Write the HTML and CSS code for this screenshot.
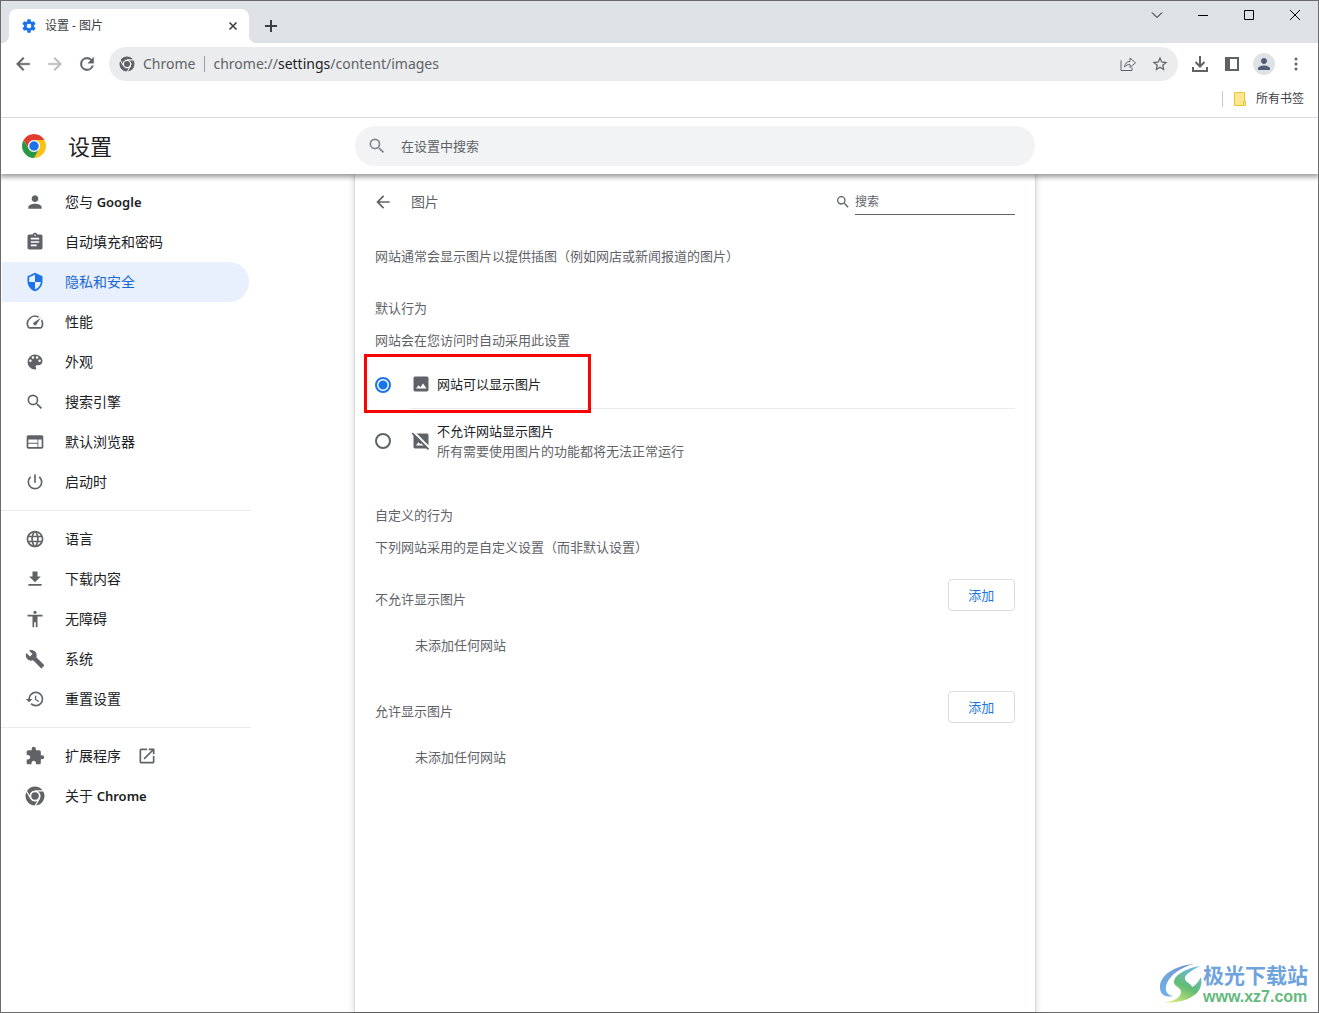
FILE: index.html
```html
<!DOCTYPE html>
<html lang="zh-CN">
<head>
<meta charset="utf-8">
<meta name="viewport" content="width=device-width, initial-scale=1">
<title>设置 - 图片</title>
<link rel="stylesheet" href="styles.css">
</head>
<body>
<svg class="sprite" aria-hidden="true">
  <symbol id="search" viewBox="0 0 24 24"><path d="M15.5 14h-.79l-.28-.27A6.47 6.47 0 0 0 16 9.5 6.5 6.5 0 1 0 9.500 16c1.610 0 3.090-.59 4.230-1.570l.27.28v.79l5 4.990L20.490 19l-4.990-5zm-6 0a4.500 4.500 0 1 1 0-9 4.500 4.500 0 0 1 0 9z"/></symbol>
  <symbol id="person" viewBox="0 0 24 24"><path d="M12 12c2.210 0 4-1.790 4-4s-1.790-4-4-4-4 1.790-4 4 1.790 4 4 4zm0 2c-2.670 0-8 1.340-8 4v2h16v-2c0-2.660-5.330-4-8-4z"/></symbol>
  <symbol id="back" viewBox="0 0 24 24"><path d="M20 11H7.830l5.590-5.590L12 4l-8 8 8 8 1.410-1.410L7.830 13H20v-2z"/></symbol>
  <symbol id="chrome" viewBox="0 0 48 48">
    <g stroke="#fff" stroke-width="2.500">
      <path d="M24 12H44.780A24 24 0 0 0 3.220 12L13.610 30A12 12 0 0 1 24 12Z"/>
      <path d="M34.390 30L24 48A24 24 0 0 0 44.780 12H24A12 12 0 0 1 34.390 30Z"/>
      <path d="M13.610 30L3.220 12A24 24 0 0 0 24 48L34.390 30A12 12 0 0 1 13.610 30Z"/>
    </g>
    <circle cx="24" cy="24" r="9"/>
  </symbol>
</svg>

<div class="window">
  <header class="tabstrip">
    <div class="tab">
      <svg class="i16 blue" viewBox="0 0 24 24"><path d="M19.430 12.980c.04-.32.07-.64.07-.98s-.03-.66-.07-.98l2.110-1.650c.19-.15.24-.42.12-.64l-2-3.460c-.12-.22-.39-.3-.61-.22l-2.490 1c-.52-.4-1.080-.73-1.690-.98l-.38-2.650C14.460 2.180 14.250 2 14 2h-4c-.25 0-.46.18-.49.42l-.38 2.650c-.61.25-1.170.59-1.690.98l-2.490-1c-.23-.09-.49 0-.61.22l-2 3.460c-.13.22-.07.49.12.64l2.110 1.650c-.04.32-.07.65-.07.98s.03.66.07.98l-2.110 1.650c-.19.15-.24.42-.12.64l2 3.460c.12.22.39.3.61.22l2.490-1c.52.4 1.080.73 1.690.98l.38 2.650c.03.24.24.42.49.42h4c.25 0 .46-.18.49-.42l.38-2.650c.61-.25 1.170-.59 1.690-.98l2.490 1c.23.09.49 0 .61-.22l2-3.460c.12-.22.07-.49-.12-.64l-2.110-1.650zM12 15.500a3.500 3.500 0 1 1 0-7 3.500 3.500 0 0 1 0 7z"/></svg>
      <span class="tab-title">设置 - 图片</span>
      <button class="tab-close" aria-label="关闭标签页"><svg class="i16 line" viewBox="0 0 16 16"><path d="M4.500 4.500l7 7M11.500 4.500l-7 7"/></svg></button>
    </div>
    <button class="new-tab" aria-label="打开新的标签页"><svg class="i16 line" viewBox="0 0 16 16"><path d="M8 2v12M2 8h12"/></svg></button>
    <div class="window-buttons">
      <button aria-label="搜索标签页"><svg class="i16 thin" viewBox="0 0 16 16"><path d="M3 5.500l5 5 5-5"/></svg></button>
      <button aria-label="最小化"><svg class="i16 thin" viewBox="0 0 16 16"><path d="M3 8.500h10"/></svg></button>
      <button aria-label="最大化"><svg class="i16 thin" viewBox="0 0 16 16"><path d="M3.500 3.500h9v9h-9z"/></svg></button>
      <button aria-label="关闭"><svg class="i16 thin" viewBox="0 0 16 16"><path d="M3 3l10 10M13 3L3 13"/></svg></button>
    </div>
  </header>

  <div class="toolbar">
    <button class="tool" aria-label="后退"><svg class="i20 heavy"><use href="#back"/></svg></button>
    <button class="tool forward" aria-label="前进" disabled><svg class="i20 heavy" viewBox="0 0 24 24"><path d="M12 4l-1.410 1.410L16.170 11H4v2h12.170l-5.580 5.590L12 20l8-8z"/></svg></button>
    <button class="tool" aria-label="重新加载"><svg class="i20 heavy" viewBox="0 0 24 24"><path d="M17.650 6.350A7.960 7.960 0 0 0 12 4a8 8 0 1 0 7.730 10h-2.080A6 6 0 1 1 12 6c1.660 0 3.140.69 4.220 1.780L13 11h7V4l-2.350 2.350z"/></svg></button>
    <div class="omnibox">
      <svg class="i16"><use href="#chrome"/></svg>
      <span class="chip">Chrome</span>
      <div class="url" role="textbox" contenteditable="true" aria-label="地址和搜索栏">chrome://<b>settings</b>/content/images</div>
      <button class="tool" aria-label="分享此页面"><svg class="i16 share" viewBox="0 0 16 16"><path d="M1 4.500v10h11v-3M4.500 11c.4-3.500 2.300-5.500 5.500-5.500V2l5.500 4.800-5.500 4.700v-3c-2.400 0-4 .8-5.500 2.500z"/></svg></button>
      <button class="tool" aria-label="为此标签页添加书签"><svg class="i18" viewBox="0 0 24 24"><path d="M22 9.240l-7.190-.62L12 2 9.190 8.630 2 9.240l5.460 4.730L5.820 21 12 17.270 18.180 21l-1.630-7.030L22 9.240zM12 15.400l-3.760 2.270 1-4.280-3.320-2.880 4.380-.38L12 6.100l1.710 4.040 4.380.38-3.320 2.880 1 4.280L12 15.400z"/></svg></button>
    </div>
    <button class="tool" aria-label="下载内容"><svg class="i18 bold" viewBox="0 0 18 18"><path d="M9 1v10M4.500 7L9 11.500 13.500 7M2 12v4h14v-4"/></svg></button>
    <button class="tool" aria-label="侧边栏"><svg class="i16" viewBox="0 0 16 16"><path fill-rule="evenodd" d="M1 1h14v14H1zM6 3v10h7V3z"/></svg></button>
    <button class="tool avatar" aria-label="个人资料"><svg class="i18"><use href="#person"/></svg></button>
    <button class="tool" aria-label="更多"><svg class="i18" viewBox="0 0 18 18"><circle cx="9" cy="4" r="1.500"/><circle cx="9" cy="9" r="1.500"/><circle cx="9" cy="14" r="1.500"/></svg></button>
  </div>

  <div class="bookmarks">
    <button class="all-bookmarks"><svg class="i16" viewBox="0 0 16 16"><path d="M2.500 1.500h10v9h1v4h-11z" fill="#ffe78f" stroke="#e8c33c"/><path d="M11.500 14v-3.500h2" fill="none" stroke="#e8c33c"/></svg>所有书签</button>
  </div>

  <div class="settings-header">
    <div class="brand">
      <svg class="i24" viewBox="0 0 48 48">
        <circle cx="24" cy="24" r="13" fill="#fff"/>
        <path fill="#e33b2e" d="M24 12H44.780A24 24 0 0 0 3.220 12L13.610 30A12 12 0 0 1 24 12Z"/>
        <path fill="#fbc116" d="M34.390 30L24 48A24 24 0 0 0 44.780 12H24A12 12 0 0 1 34.390 30Z"/>
        <path fill="#269847" d="M13.610 30L3.220 12A24 24 0 0 0 24 48L34.390 30A12 12 0 0 1 13.610 30Z"/>
        <circle cx="24" cy="24" r="9.500" fill="#1a73e8"/>
      </svg>
      <h1>设置</h1>
    </div>
    <label class="main-search">
      <svg class="i20"><use href="#search"/></svg>
      <input type="search" placeholder="在设置中搜索" aria-label="在设置中搜索">
    </label>
  </div>

  <div class="body">
    <nav class="menu">
      <a href="#people"><svg class="i20"><use href="#person"/></svg><span>您与 <b>Google</b></span></a>
      <a href="#autofill"><svg class="i20" viewBox="0 0 24 24"><path d="M19 3h-4.180C14.400 1.840 13.300 1 12 1c-1.300 0-2.400.84-2.820 2H5c-1.100 0-2 .9-2 2v14c0 1.100.9 2 2 2h14c1.100 0 2-.9 2-2V5c0-1.100-.9-2-2-2zm-7 0c.55 0 1 .45 1 1s-.45 1-1 1-1-.45-1-1 .45-1 1-1zm2 14H7v-2h7v2zm3-4H7v-2h10v2zm0-4H7V7h10v2z"/></svg>自动填充和密码</a>
      <a href="#privacy" class="selected" aria-current="page"><svg class="i20" viewBox="0 0 24 24"><path d="M12 1L3 5v6c0 5.550 3.840 10.740 9 12 5.160-1.260 9-6.450 9-12V5l-9-4zm0 10.990h7c-.53 4.120-3.280 7.790-7 8.940V12H5V6.300l7-3.110v8.800z"/></svg>隐私和安全</a>
      <a href="#performance"><svg class="i20" viewBox="0 0 24 24"><path d="M20.380 8.570l-1.230 1.850a8 8 0 0 1-.22 7.580H5.070A8 8 0 0 1 15.580 6.850l1.850-1.230A10 10 0 0 0 3.350 19a2 2 0 0 0 1.720 1h13.850a2 2 0 0 0 1.740-1 10 10 0 0 0-.27-10.440zm-9.790 6.840a2 2 0 0 0 2.830 0l5.660-8.490-8.490 5.660a2 2 0 0 0 0 2.830z"/></svg>性能</a>
      <a href="#appearance"><svg class="i20" viewBox="0 0 24 24"><path d="M12 3a9 9 0 0 0 0 18c.83 0 1.500-.67 1.500-1.500 0-.39-.15-.74-.39-1.010-.23-.26-.38-.61-.38-.99 0-.83.67-1.500 1.500-1.500H16c2.760 0 5-2.240 5-5 0-4.420-4.030-8-9-8zm-5.500 9a1.500 1.500 0 1 1 0-3 1.500 1.500 0 0 1 0 3zm3-4a1.500 1.500 0 1 1 0-3 1.500 1.500 0 0 1 0 3zm5 0a1.500 1.500 0 1 1 0-3 1.500 1.500 0 0 1 0 3zm3 4a1.500 1.500 0 1 1 0-3 1.500 1.500 0 0 1 0 3z"/></svg>外观</a>
      <a href="#engine"><svg class="i20"><use href="#search"/></svg>搜索引擎</a>
      <a href="#browser"><svg class="i20" viewBox="0 0 24 24"><path d="M20 4H4c-1.100 0-1.990.9-1.990 2L2 18c0 1.100.9 2 2 2h16c1.100 0 2-.9 2-2V6c0-1.100-.9-2-2-2zm-5 14H4v-4h11v4zm0-5H4V9h11v4zm5 5h-4V9h4v9z"/></svg>默认浏览器</a>
      <a href="#startup"><svg class="i20" viewBox="0 0 24 24"><path d="M13 3h-2v10h2V3zm4.830 2.170l-1.420 1.420A6.920 6.920 0 0 1 19 12a7 7 0 1 1-11.420-5.420L6.170 5.170A8.930 8.930 0 0 0 3 12a9 9 0 0 0 18 0c0-2.740-1.230-5.180-3.170-6.830z"/></svg>启动时</a>
      <hr>
      <a href="#languages"><svg class="i20" viewBox="0 0 24 24"><path d="M11.990 2C6.470 2 2 6.480 2 12s4.470 10 9.990 10C17.520 22 22 17.520 22 12S17.520 2 11.990 2zm6.930 6h-2.950a15.650 15.650 0 0 0-1.380-3.560A8.030 8.030 0 0 1 18.920 8zM12 4.040c.83 1.200 1.480 2.530 1.910 3.960h-3.820c.43-1.430 1.080-2.760 1.910-3.960zM4.260 14C4.100 13.360 4 12.690 4 12s.1-1.360.26-2h3.380c-.08.66-.14 1.320-.14 2s.06 1.340.14 2H4.260zm.82 2h2.950c.32 1.250.78 2.450 1.380 3.560A7.990 7.990 0 0 1 5.080 16zm2.950-8H5.080a7.990 7.990 0 0 1 4.330-3.560A15.650 15.650 0 0 0 8.030 8zM12 19.960c-.83-1.200-1.480-2.530-1.910-3.960h3.820c-.43 1.430-1.080 2.760-1.910 3.960zM14.340 14H9.660c-.09-.66-.16-1.320-.16-2s.07-1.350.16-2h4.680c.09.65.16 1.320.16 2s-.07 1.340-.16 2zm.25 5.560c.6-1.110 1.060-2.310 1.380-3.560h2.950a8.030 8.030 0 0 1-4.330 3.560zM16.360 14c.08-.66.14-1.320.14-2s-.06-1.340-.14-2h3.380c.16.64.26 1.310.26 2s-.1 1.360-.26 2h-3.380z"/></svg>语言</a>
      <a href="#downloads"><svg class="i20" viewBox="0 0 24 24"><path d="M19 9h-4V3H9v6H5l7 7 7-7zM4 18v2h16v-2H4z"/></svg>下载内容</a>
      <a href="#a11y"><svg class="i20" viewBox="0 0 24 24"><path d="M12 2a2 2 0 1 1 0 4 2 2 0 0 1 0-4zm9 7h-6v13h-2v-6h-2v6H9V9H3V7h18v2z"/></svg>无障碍</a>
      <a href="#system"><svg class="i20" viewBox="0 0 24 24"><path d="M22.700 19l-9.100-9.100c.9-2.300.4-5-1.500-6.900-2-2-5-2.400-7.400-1.300L9 6 6 9 1.600 4.700C.4 7.100.9 10.100 2.900 12.100c1.900 1.900 4.600 2.400 6.900 1.500l9.100 9.100c.4.4 1 .4 1.400 0l2.300-2.300c.5-.4.5-1.100.1-1.400z"/></svg>系统</a>
      <a href="#reset"><svg class="i20" viewBox="0 0 24 24"><path d="M13 3a9 9 0 0 0-9 9H1l3.890 3.890.07.14L9 12H6c0-3.870 3.130-7 7-7s7 3.130 7 7-3.130 7-7 7c-1.930 0-3.680-.79-4.940-2.060l-1.420 1.420A8.950 8.950 0 0 0 13 21a9 9 0 0 0 0-18zm-1 5v5l4.280 2.540.72-1.210-3.500-2.080V8H12z"/></svg>重置设置</a>
      <hr>
      <a href="#extensions"><svg class="i20" viewBox="0 0 24 24"><path d="M20.500 11H19V7c0-1.100-.9-2-2-2h-4V3.500a2.500 2.500 0 0 0-5 0V5H4c-1.100 0-1.990.9-1.990 2v3.800H3.500c1.490 0 2.700 1.210 2.700 2.700s-1.210 2.700-2.700 2.700H2V20c0 1.100.9 2 2 2h3.800v-1.500c0-1.490 1.210-2.700 2.700-2.700s2.700 1.210 2.700 2.700V22H17c1.100 0 2-.9 2-2v-4h1.500a2.500 2.500 0 0 0 0-5z"/></svg>扩展程序<svg class="i20 external" viewBox="0 0 24 24"><path d="M19 19H5V5h7V3H5a2 2 0 0 0-2 2v14a2 2 0 0 0 2 2h14c1.100 0 2-.9 2-2v-7h-2v7zM14 3v2h3.590l-9.830 9.830 1.410 1.410L19 6.410V10h2V3h-7z"/></svg></a>
      <a href="#about"><svg class="i20"><use href="#chrome"/></svg><span>关于 <b>Chrome</b></span></a>
    </nav>

    <main class="card">
      <div class="card-header">
        <button class="back" aria-label="返回"><svg class="i20"><use href="#back"/></svg></button>
        <h2>图片</h2>
        <label class="page-search">
          <svg class="i16"><use href="#search"/></svg>
          <input type="search" placeholder="搜索" aria-label="搜索">
        </label>
      </div>
      <p class="intro">网站通常会显示图片以提供插图（例如网店或新闻报道的图片）</p>

      <h3>默认行为</h3>
      <p>网站会在您访问时自动采用此设置</p>
      <div class="options">
        <label class="option highlighted">
          <input type="radio" name="images" checked>
          <span class="option-body">
            <svg class="i20" viewBox="0 0 24 24"><path d="M21 19V5c0-1.100-.9-2-2-2H5c-1.100 0-2 .9-2 2v14c0 1.100.9 2 2 2h14c1.100 0 2-.9 2-2zM6 17.500l3-4 2.200 2.500 3.300-4.500 4 6z"/></svg>
            <span class="option-text">网站可以显示图片</span>
          </span>
        </label>
        <label class="option tall">
          <input type="radio" name="images">
          <span class="option-body">
            <svg class="i20" viewBox="0 0 24 24"><path d="M21 19V5c0-1.100-.9-2-2-2H5c-1.100 0-2 .9-2 2v14c0 1.100.9 2 2 2h14c1.100 0 2-.9 2-2zM6 17.500l3-4 2.200 2.500 1.500-2 4.500 3.500z"/><path d="M3.500 1.500l19 19" stroke="#fff" stroke-width="2.500"/><path d="M1.500 2.500l19.500 19.500" stroke="#5f6368" stroke-width="2"/></svg>
            <span class="option-text">不允许网站显示图片<small>所有需要使用图片的功能都将无法正常运行</small></span>
          </span>
        </label>
      </div>

      <h3>自定义的行为</h3>
      <p>下列网站采用的是自定义设置（而非默认设置）</p>
      <section class="site-list">
        <div class="site-list-header"><h4>不允许显示图片</h4><button class="add">添加</button></div>
        <p class="empty">未添加任何网站</p>
      </section>
      <section class="site-list">
        <div class="site-list-header"><h4>允许显示图片</h4><button class="add">添加</button></div>
        <p class="empty">未添加任何网站</p>
      </section>
    </main>
  </div>

  <div class="watermark">
    <svg viewBox="0 0 42 42" aria-hidden="true">
      <defs>
        <linearGradient id="swirl-a" x1="0" y1="1" x2="1" y2="0"><stop offset="0" stop-color="#6fb3e6"/><stop offset="1" stop-color="#7394cf"/></linearGradient>
        <linearGradient id="swirl-b" x1=".2" y1="1" x2=".7" y2="0"><stop offset="0" stop-color="#dcec7e"/><stop offset=".5" stop-color="#62bd72"/><stop offset="1" stop-color="#6fb5e4"/></linearGradient>
      </defs>
      <path fill="url(#swirl-a)" d="M34 1C18 2 2 10 0 22c-1 9 5 13 13 11-6-1-9-6-6-13C11 11 22 4 34 1z"/>
      <path fill="url(#swirl-b)" d="M41 14C44 29 32 40 3 40c12-2 18-6 18-11 0-5-7-5-7-10C14 12 27 5 40 3 31 8 24 12 25 16c1 4 6 4 7 8 4-2 7-6 9-10z"/>
    </svg>
    <div><strong>极光下载站</strong><span>www.xz7.com</span></div>
  </div>
</div>
</body>
</html>
```
FILE: styles.css
```css
:root {
  --text: #202124;
  --muted: #5f6368;
  --blue: #1a73e8;
  --line: #e8eaed;
}

*, *::before, *::after { box-sizing: border-box; }

body {
  margin: 0;
  background: #fff;
  color: var(--text);
  font: 13px/20px "Noto Sans", "Noto Sans CJK SC", sans-serif;
}

h1, h2, h3, h4, p { margin: 0; font-size: 13px; font-weight: 400; }

button {
  display: flex;
  align-items: center;
  justify-content: center;
  padding: 0;
  border: 0;
  background: none;
  color: inherit;
  font: inherit;
}

input { font: inherit; color: inherit; }

svg { display: block; flex: none; fill: currentColor; }
.sprite { position: absolute; width: 0; height: 0; }
.i16 { width: 16px; height: 16px; }
.i18 { width: 18px; height: 18px; }
.i20 { width: 20px; height: 20px; }
.i24 { width: 24px; height: 24px; }
.line, .thin, .share, .bold { fill: none; stroke: currentColor; }
.line, .bold { stroke-width: 2; }
.heavy { stroke: currentColor; stroke-width: .5; }
.blue { color: var(--blue); }

.window {
  position: relative;
  display: flex;
  flex-direction: column;
  min-height: 100vh;
  border: 1px solid #6b6b6e;
}

/* Tab strip */
.tabstrip {
  display: flex;
  height: 42px;
  padding-left: 8px;
  background: #dee1e6;
}
.tab {
  position: relative;
  display: flex;
  align-items: center;
  gap: 8px;
  width: 240px;
  margin-top: 8px;
  padding: 0 8px 0 12px;
  border-radius: 8px 8px 0 0;
  background: #fff;
  font-size: 12px;
}
.tab::before, .tab::after {
  content: "";
  position: absolute;
  bottom: 0;
  width: 8px;
  height: 8px;
}
.tab::before { right: 100%; background: radial-gradient(circle at 0 0, transparent 8px, #fff 8px); }
.tab::after { left: 100%; background: radial-gradient(circle at 100% 0, transparent 8px, #fff 8px); }
.tab-title { flex: 1; color: #3c4043; }
.tab-close { color: #3c4043; }
.tab-close .line { stroke-width: 1.6; }
.new-tab { width: 28px; margin: 8px 0 0 8px; color: #3c4043; }
.window-buttons { display: flex; height: 28px; margin-left: auto; color: #000; }
.window-buttons button { width: 46px; }

/* Toolbar */
.toolbar {
  display: flex;
  align-items: center;
  gap: 4px;
  height: 42px;
  padding: 0 8px;
  color: var(--muted);
}
.tool { width: 28px; height: 28px; }
.forward { color: #babcbe; }
.omnibox {
  display: flex;
  flex: 1;
  align-items: center;
  gap: 4px;
  height: 34px;
  margin: 0 4px;
  padding: 0 4px 0 10px;
  border-radius: 17px;
  background: #ebecee;
  font-size: 14px;
}
.chip { margin-left: 4px; padding-right: 9px; border-right: 1px solid #9aa0a6; line-height: 16px; }
.url { flex: 1; margin-left: 4px; outline: 0; }
.url b { color: var(--text); font-weight: 400; }
.avatar { width: 22px; height: 22px; margin: 0 3px; border-radius: 50%; background: #dee1e6; color: #4f5d75; }

.bookmarks {
  display: flex;
  justify-content: flex-end;
  align-items: center;
  height: 33px;
  padding: 0 14px 4px 0;
  border-bottom: 1px solid #dadce0;
}
.all-bookmarks { gap: 8px; height: 16px; padding-left: 9px; border-left: 1px solid #c8cacd; color: #3c4043; font-size: 12px; }

/* Settings header and body share one column grid */
.settings-header, .body {
  display: grid;
  grid-template-columns: minmax(250px, 5fr) minmax(0, 680px) minmax(0, 4fr);
}
.settings-header {
  position: relative;
  z-index: 1;
  align-items: center;
  height: 56px;
  background: #fff;
  box-shadow: 0 2px 5px 1px rgba(0, 0, 0, .4);
  clip-path: inset(0 0 -8px 0);
}
.brand { display: flex; align-items: center; gap: 22px; padding-left: 21px; }
.brand h1 { font-size: 22px; line-height: 32px; }
.main-search {
  display: flex;
  align-items: center;
  gap: 14px;
  height: 40px;
  padding: 0 12px;
  border-radius: 20px;
  background: #f1f3f4;
  color: #80868b;
}
.main-search input, .page-search input {
  flex: 1;
  min-width: 0;
  padding: 0;
  border: 0;
  outline: 0;
  background: none;
}
input::placeholder { color: var(--muted); opacity: 1; }

.body { flex: 1; }

/* Side menu */
.menu { width: 250px; padding-top: 8px; font-size: 14px; }
.menu a {
  display: flex;
  align-items: center;
  gap: 20px;
  height: 40px;
  margin: 0 2px 0 1px;
  padding-left: 23px;
  border-radius: 0 20px 20px 0;
  color: var(--text);
  text-decoration: none;
}
.menu svg { color: var(--muted); }
.menu b { font-size: 13px; font-weight: 600; }
.menu .external { margin-left: -4px; }
.menu .selected { background: #e8f0fe; color: #1967d2; }
.menu .selected svg { color: var(--blue); }
.menu hr { height: 1px; margin: 8px 0; border: 0; background: var(--line); }

/* Card */
.card {
  padding: 0 20px 20px;
  color: var(--muted);
  box-shadow: 0 1px 2px rgba(60, 64, 67, .3), 0 1px 6px 2px rgba(60, 64, 67, .15);
}
.card-header { display: flex; align-items: center; height: 56px; }
.card-header h2 { margin-left: 18px; font-size: 14px; }
.back { margin-left: -2px; }
.page-search { display: flex; align-items: center; gap: 4px; width: 180px; margin-left: auto; font-size: 12px; }
.page-search input { height: 26px; border-bottom: 1px solid var(--muted); }
.intro { padding: 16px 0 0; }
.card h3 { margin: 32px 0 12px; }

.options { margin-top: 10px; }
.option { position: relative; display: flex; height: 49px; color: var(--text); }
.option.tall { height: 64px; }
.option input {
  appearance: none;
  align-self: center;
  width: 16px;
  height: 16px;
  margin: 0 20px 0 0;
  border: 2px solid var(--muted);
  border-radius: 50%;
}
.option input:checked { border-color: var(--blue); background: radial-gradient(circle, var(--blue) 4px, transparent 5px); }
.option-body { display: flex; flex: 1; align-items: center; gap: 6px; }
.option-body svg { color: var(--muted); }
.option:not(:last-child) .option-body { border-bottom: 1px solid var(--line); }
.option small { display: block; color: var(--muted); font-size: 13px; }
.highlighted::after {
  content: "";
  position: absolute;
  top: -6px;
  left: -11px;
  width: 227px;
  height: 59px;
  border: 3px solid #f90400;
}

.site-list { margin-top: 36px; }
p + .site-list { margin-top: 22px; }
.site-list-header { display: flex; justify-content: space-between; height: 56px; }
.site-list h4 { margin-top: 10px; }
.add { width: 67px; height: 32px; border: 1px solid #dadce0; border-radius: 4px; color: var(--blue); }
.empty { padding-left: 40px; }

/* Corner mark */
.watermark {
  position: absolute;
  right: 10px;
  bottom: 6px;
  display: flex;
  align-items: center;
  gap: 1px;
}
.watermark svg { width: 42px; height: 42px; }
.watermark strong, .watermark span { display: block; }
.watermark strong { color: #6fa3dc; font-size: 21px; line-height: 26px; }
.watermark span { color: #63b97c; font: bold 16px/18px "Liberation Sans", sans-serif; }
```
